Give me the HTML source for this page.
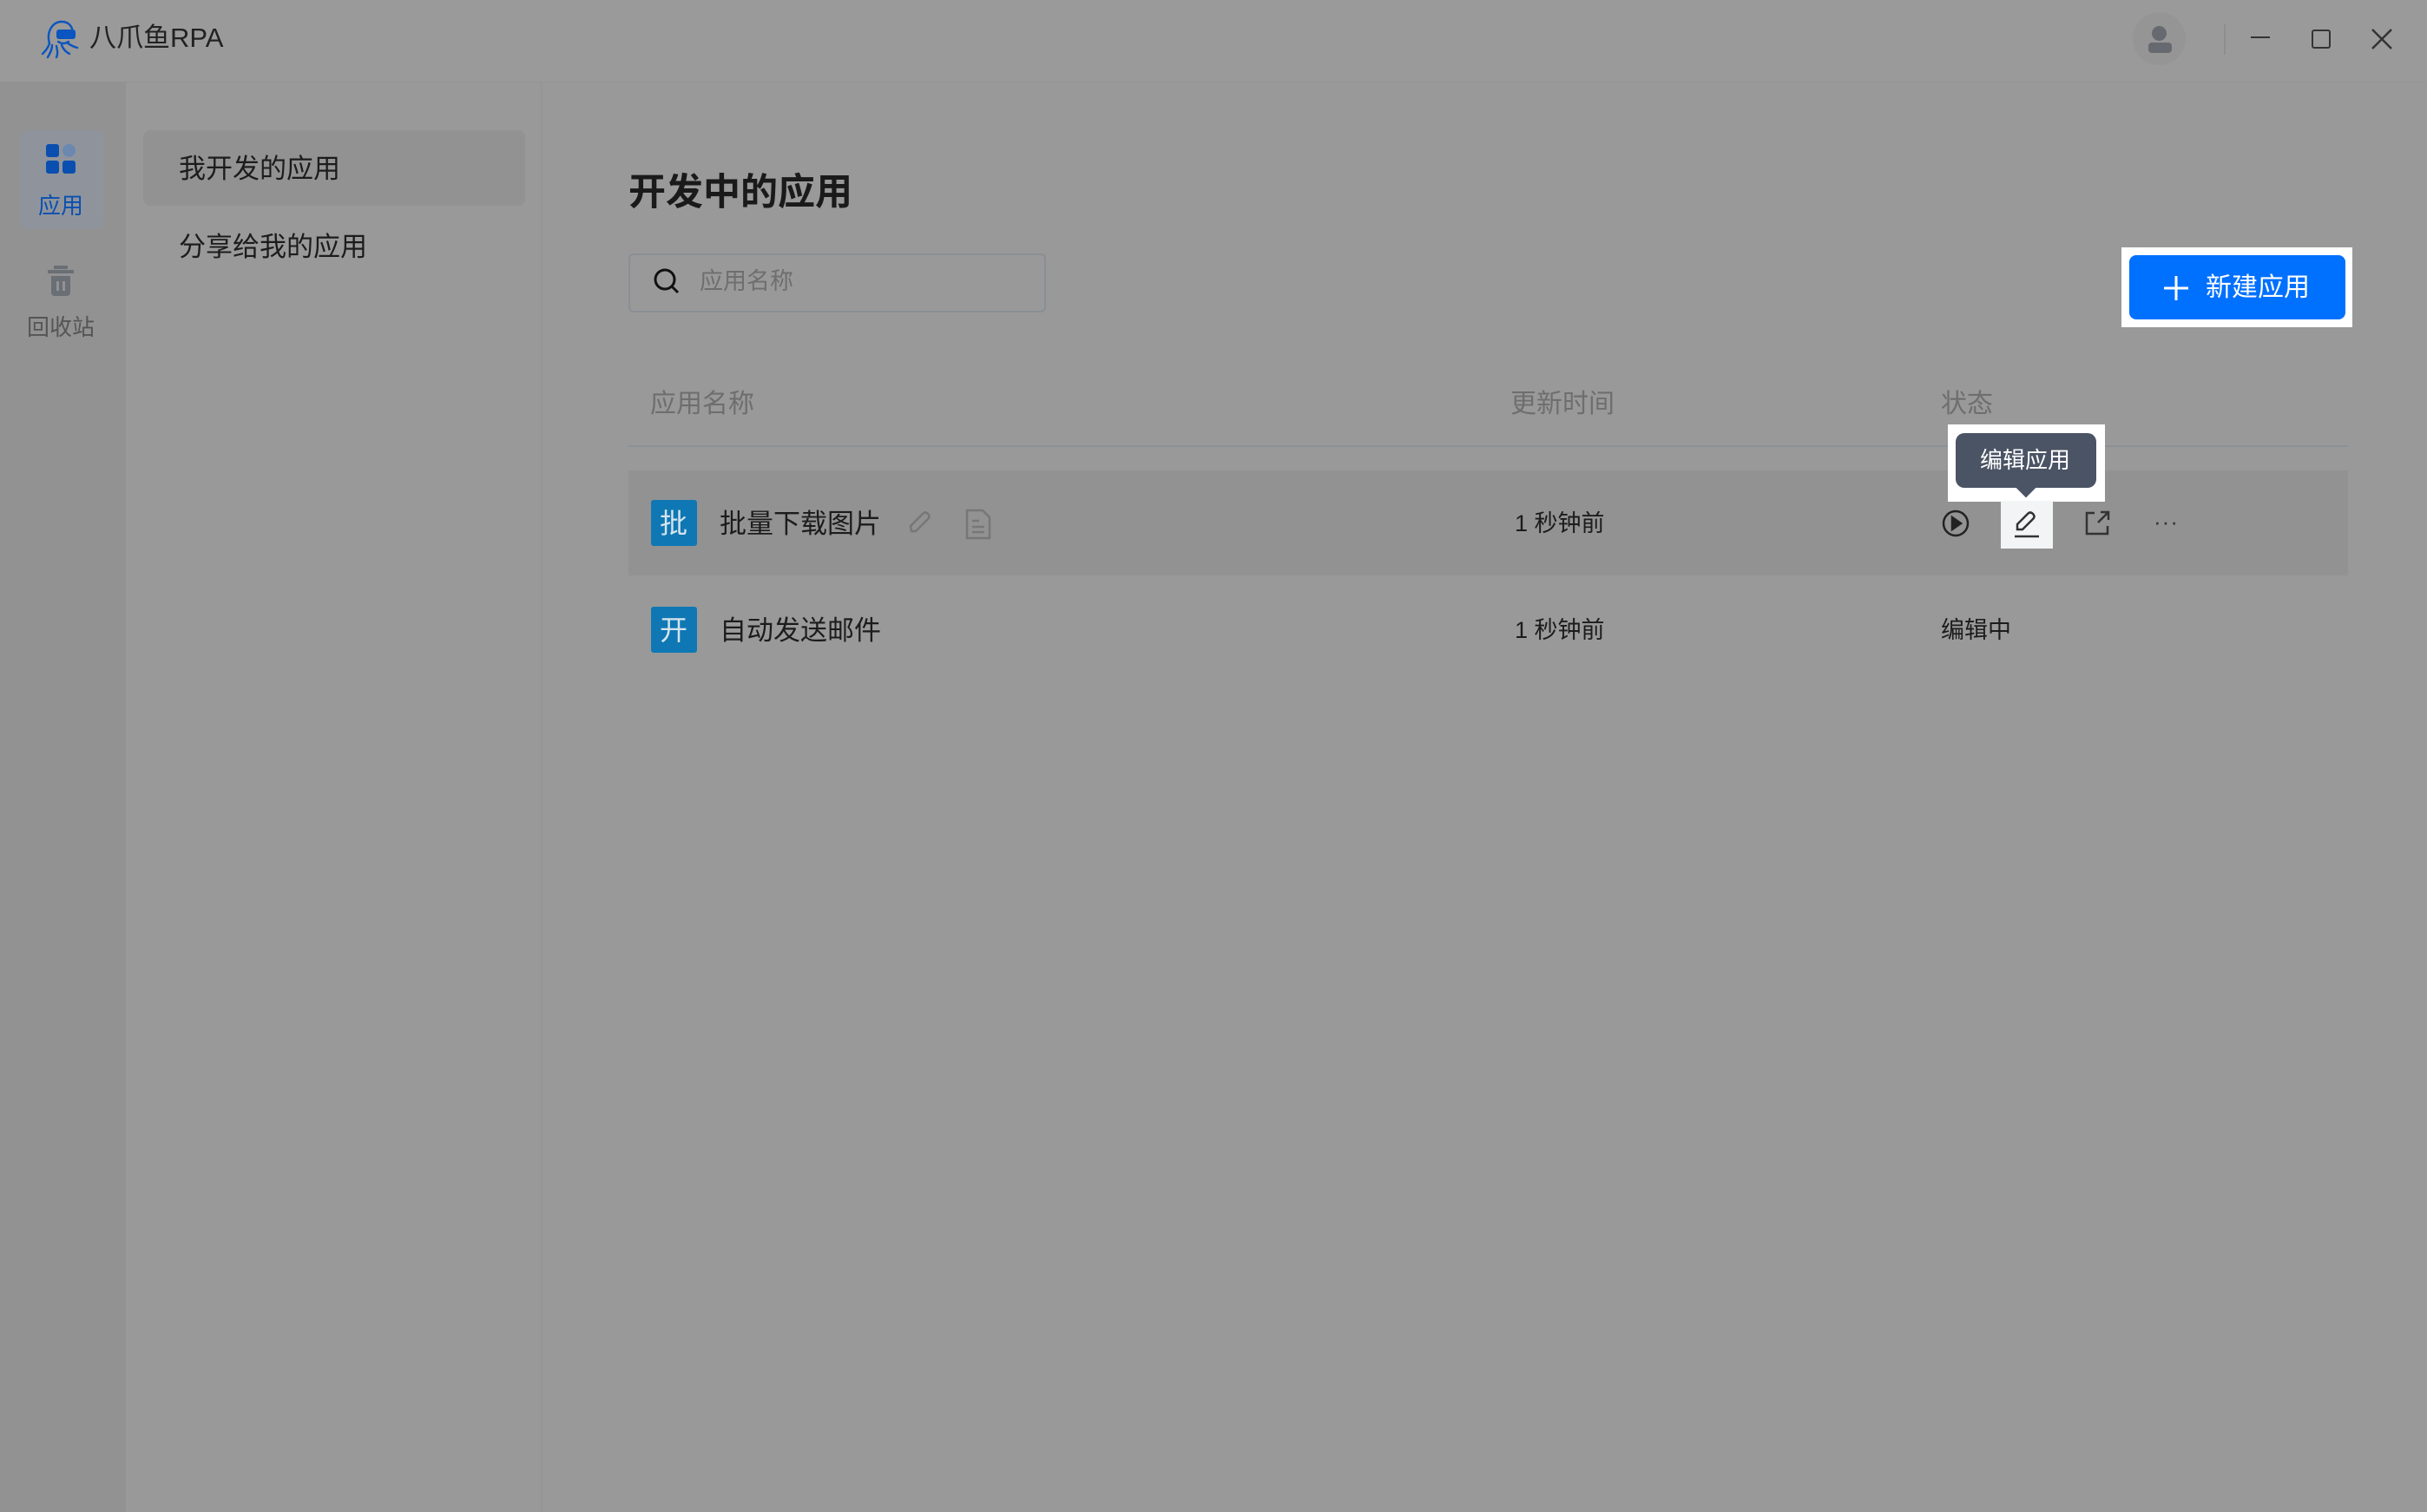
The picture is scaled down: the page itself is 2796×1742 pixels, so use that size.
<!DOCTYPE html>
<html><head><meta charset="utf-8"><style>
*{margin:0;padding:0;box-sizing:border-box}
body{width:2796px;height:1742px;background:#999;font-family:"Liberation Sans","Noto Sans CJK SC",sans-serif;position:relative;overflow:hidden;color:#1c1c1c}
.a{position:absolute}
.t{position:absolute;white-space:nowrap;line-height:1}
</style></head><body>
<div class="a" style="left:0;top:0;width:2796px;height:95px;background:#9a9a9a;border-bottom:1px solid #939393"></div>
<div class="a" style="left:0;top:95px;width:145px;height:1647px;background:#929292"></div>
<div class="a" style="left:145px;top:95px;width:480px;height:1647px;background:#999;border-right:2px solid #929598"></div>
<!-- logo -->
<svg class="a" style="left:47px;top:22px" width="44" height="46" viewBox="0 0 44 46" fill="none" stroke="#0a55c0" stroke-width="2.4" stroke-linecap="round">
<path d="M10 28 C6 14 14 3 24 3 C33 3 38 10 36 18"/>
<path d="M10 28 C8 34 5 37 2 40 M13 30 C13 36 10 40 8 44 M18 31 C19 36 20 40 18 44 M24 30 C26 35 29 38 33 40 M30 27 C34 30 38 32 42 33"/>
<path d="M20 26 Q26 30 32 26"/>
<rect x="18" y="12" width="22" height="11" rx="3" fill="#0a55c0" stroke="none"/>
</svg>
<div class="t" style="left:103px;top:28px;font-size:31px;color:#222">八爪鱼RPA</div>
<!-- header right -->
<div class="a" style="left:2457px;top:14px;width:61px;height:61px;border-radius:50%;background:#959595"></div>
<div class="a" style="left:2479px;top:30px;width:17px;height:17px;border-radius:50%;background:#666a70"></div>
<div class="a" style="left:2475px;top:49px;width:27px;height:12px;border-radius:4px;background:#666a70"></div>
<div class="a" style="left:2562px;top:28px;width:2px;height:35px;background:#8e8e8e"></div>
<div class="a" style="left:2593px;top:42px;width:22px;height:2px;background:#333"></div>
<div class="a" style="left:2663px;top:34px;width:22px;height:22px;border:2.5px solid #333;border-radius:3px"></div>
<svg class="a" style="left:2732px;top:33px" width="24" height="24" stroke="#333" stroke-width="2.5"><path d="M1 1L23 23M23 1L1 23"/></svg>
<!-- nav -->
<div class="a" style="left:23px;top:150px;width:96px;height:114px;border-radius:8px;background:#8f949c"></div>
<div class="a" style="left:53px;top:166px;width:15px;height:15px;border-radius:3px;background:#0a4fb0"></div>
<div class="a" style="left:72px;top:166px;width:15px;height:15px;border-radius:50%;background:#6a88b0"></div>
<div class="a" style="left:53px;top:185px;width:15px;height:15px;border-radius:3px;background:#0a4fb0"></div>
<div class="a" style="left:72px;top:185px;width:15px;height:15px;border-radius:3px;background:#0a4fb0"></div>
<div class="t" style="left:44px;top:224px;font-size:26px;color:#0a4fb0">应用</div>
<div class="a" style="left:55px;top:311px;width:30px;height:4px;background:#6a6e75"></div>
<div class="a" style="left:62px;top:306px;width:16px;height:4px;background:#6a6e75"></div>
<div class="a" style="left:59px;top:318px;width:22px;height:23px;border-radius:0 0 4px 4px;background:#6a6e75"></div>
<div class="a" style="left:65px;top:324px;width:3px;height:11px;background:#929292"></div>
<div class="a" style="left:72px;top:324px;width:3px;height:11px;background:#929292"></div>
<div class="t" style="left:31px;top:364px;font-size:26px;color:#555">回收站</div>
<!-- menu -->
<div class="a" style="left:165px;top:150px;width:440px;height:87px;border-radius:8px;background:#929292"></div>
<div class="t" style="left:206px;top:179px;font-size:31px">我开发的应用</div>
<div class="t" style="left:206px;top:269px;font-size:31px">分享给我的应用</div>
<!-- main -->
<div class="t" style="left:724px;top:201px;font-size:43px;font-weight:bold;color:#1a1a1a">开发中的应用</div>
<div class="a" style="left:724px;top:292px;width:481px;height:68px;border:2px solid #8a8e95;border-radius:6px"></div>
<svg class="a" style="left:752px;top:308px" width="32" height="32" fill="none" stroke="#111" stroke-width="3"><circle cx="14" cy="14" r="11"/><path d="M22 22L29 29"/></svg>
<div class="t" style="left:806px;top:311px;font-size:27px;color:#6e6e6e">应用名称</div>
<div class="a" style="left:2444px;top:285px;width:266px;height:92px;background:#fff"></div>
<div class="a" style="left:2453px;top:294px;width:249px;height:74px;border-radius:8px;background:#0070ff"></div>
<svg class="a" style="left:2493px;top:318px" width="28" height="28" stroke="#fff" stroke-width="3"><path d="M14 0V28M0 14H28"/></svg>
<div class="t" style="left:2541px;top:317px;font-size:30px;color:#fff">新建应用</div>
<div class="t" style="left:749px;top:451px;font-size:30px;color:#6e6e6e">应用名称</div>
<div class="t" style="left:1740px;top:451px;font-size:30px;color:#6e6e6e">更新时间</div>
<div class="t" style="left:2236px;top:451px;font-size:30px;color:#6e6e6e">状态</div>
<div class="a" style="left:724px;top:513px;width:1981px;height:2px;background:#8c9096"></div>
<div class="a" style="left:724px;top:542px;width:1981px;height:121px;background:#929292"></div>
<div class="a" style="left:750px;top:576px;width:53px;height:53px;border-radius:3px;background:#0f78b4"></div>
<div class="t" style="left:760px;top:587px;font-size:32px;color:#d6e4ee">批</div>
<div class="t" style="left:829px;top:588px;font-size:31px">批量下载图片</div>
<svg class="a" style="left:1046px;top:588px" width="28" height="28" fill="none" stroke="#777" stroke-width="2.5"><path d="M4 24L3 18L17 4Q20 1 23 4Q26 7 23 10L9 24Z"/></svg>
<svg class="a" style="left:1112px;top:586px" width="30" height="36" fill="none" stroke="#777" stroke-width="2.5"><path d="M2 2H20L28 10V34H2Z M8 14H16M8 21H22M8 27H22"/></svg>
<div class="t" style="left:1745px;top:590px;font-size:27px">1 秒钟前</div>
<svg class="a" style="left:2237px;top:587px" width="32" height="32" fill="none" stroke="#222" stroke-width="2.5"><circle cx="16" cy="16" r="14"/><path d="M12 9L22 16L12 23Z" fill="#222"/></svg>
<div class="a" style="left:2244px;top:489px;width:181px;height:89px;background:#fff"></div>
<div class="a" style="left:2305px;top:577px;width:60px;height:55px;background:#f3f4f6"></div>
<div class="a" style="left:2253px;top:499px;width:162px;height:63px;border-radius:10px;background:#4b5465"></div>
<div class="a" style="left:2326px;top:554px;width:16px;height:16px;background:#4b5465;transform:rotate(45deg)"></div>
<div class="t" style="left:2281px;top:517px;font-size:26px;color:#fff">编辑应用</div>
<svg class="a" style="left:2319px;top:588px" width="32" height="32" fill="none" stroke="#333" stroke-width="2.5"><path d="M5 22L5 16L17 4Q20 1 23 4Q26 7 23 10L11 22Z M2 30H30"/></svg>
<svg class="a" style="left:2401px;top:588px" width="30" height="30" fill="none" stroke="#333" stroke-width="2.5"><path d="M12 3H3V27H27V18M16 14L28 2M19 2H28V11"/></svg>
<div class="t" style="left:2481px;top:588px;font-size:26px;color:#333;letter-spacing:1px">···</div>
<div class="a" style="left:750px;top:699px;width:53px;height:53px;border-radius:3px;background:#0f78b4"></div>
<div class="t" style="left:760px;top:710px;font-size:32px;color:#d6e4ee">开</div>
<div class="t" style="left:829px;top:711px;font-size:31px">自动发送邮件</div>
<div class="t" style="left:1745px;top:713px;font-size:27px">1 秒钟前</div>
<div class="t" style="left:2236px;top:713px;font-size:27px">编辑中</div>
</body></html>
